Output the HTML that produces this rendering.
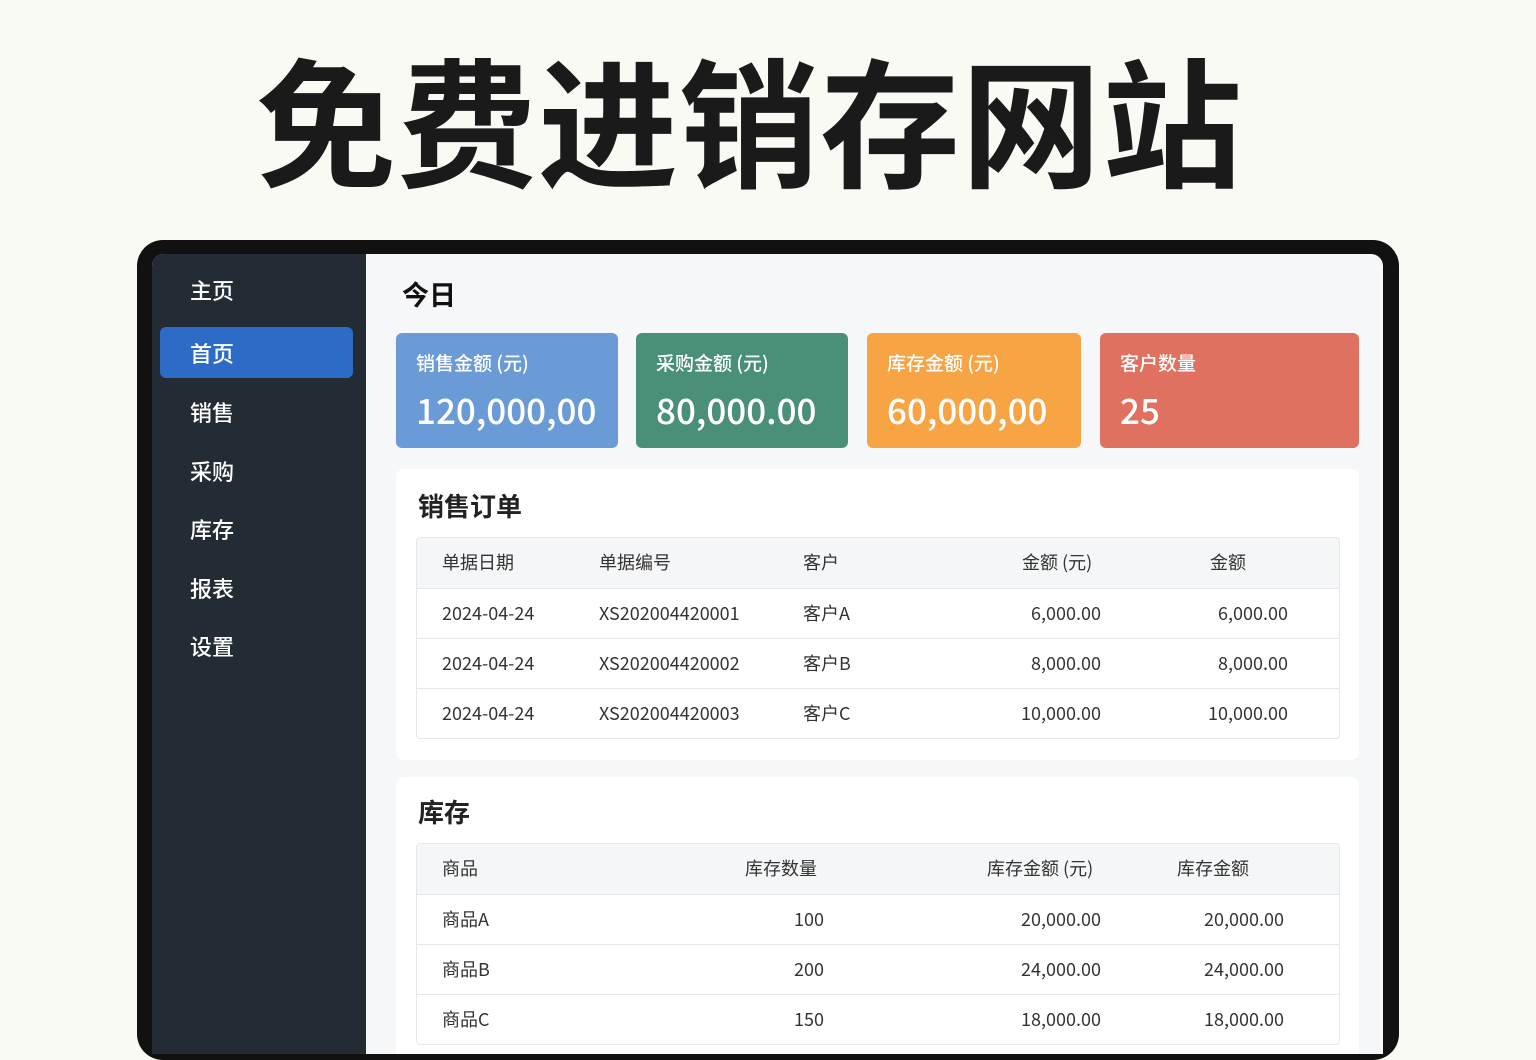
<!DOCTYPE html>
<html><head><meta charset="utf-8">
<style>
*{margin:0;padding:0;box-sizing:border-box}
body{width:1536px;height:1024px;overflow:hidden;background:#fafaf5;font-family:"Noto Sans CJK SC",sans-serif;position:relative}
.a{position:absolute;white-space:nowrap}
h1{position:absolute;left:256px;top:40px;white-space:nowrap;font:700 140px/1.1 "Noto Sans CJK SC",sans-serif;color:#1a1a1a;letter-spacing:1px}
.frame{position:absolute;left:137px;top:240px;width:1262px;height:820px;background:#111;border-radius:26px}
.screen{position:absolute;left:152px;top:254px;width:1231px;height:800px;background:#f6f7f9;border-radius:12px 12px 0 0;overflow:hidden}
.side{position:absolute;left:0;top:0;width:214px;height:800px;background:#232b35}
.nav{position:absolute;left:38px;color:#fff;font:500 22px "Noto Sans CJK SC",sans-serif}
.act{position:absolute;left:8px;top:73px;width:193px;height:51px;background:#2d6cc6;border-radius:6px}
.card{position:absolute;top:79px;height:115px;border-radius:6px;color:#fff}
.card .l{position:absolute;left:20px;top:16px;font:500 19px "Noto Sans CJK SC",sans-serif}
.card .v{position:absolute;left:20px;top:54px;font:500 35px/1.3 "Noto Sans CJK SC",sans-serif}
.panel{position:absolute;left:244px;width:963px;background:#fff;border-radius:8px}
.pt{position:absolute;left:22px;font:700 26px "Noto Sans CJK SC",sans-serif;color:#222}
.tbl{position:absolute;left:20px;width:924px;border:1px solid #e6e7ea;border-radius:4px;overflow:hidden}
.row{position:relative;height:50px;border-top:1px solid #e6e7ea;font:18px/22px "Noto Sans CJK SC",sans-serif;color:#333}
.row:first-child{border-top:none;background:#f5f6f7}
.row span{position:absolute;top:13px}
.r{text-align:right}
</style></head><body>
<h1>免费进销存网站</h1>
<div class="frame"></div>
<div class="screen">
 <div class="side">
  <div class="act"></div>
  <div class="nav" style="top:20px">主页</div>
  <div class="nav" style="top:83px">首页</div>
  <div class="nav" style="top:142px">销售</div>
  <div class="nav" style="top:201px">采购</div>
  <div class="nav" style="top:259px">库存</div>
  <div class="nav" style="top:318px">报表</div>
  <div class="nav" style="top:376px">设置</div>
 </div>
 <div class="a" style="left:250px;top:20px;font:700 27px 'Noto Sans CJK SC',sans-serif;color:#111">今日</div>
 <div class="card" style="left:244px;width:222px;background:#6b9bd6"><div class="l">销售金额 (元)</div><div class="v">120,000,00</div></div>
 <div class="card" style="left:484px;width:212px;background:#4a9079"><div class="l">采购金额 (元)</div><div class="v">80,000.00</div></div>
 <div class="card" style="left:715px;width:214px;background:#f6a444"><div class="l">库存金额 (元)</div><div class="v">60,000,00</div></div>
 <div class="card" style="left:948px;width:259px;background:#e07060"><div class="l">客户数量</div><div class="v">25</div></div>

 <div class="panel" style="top:215px;height:291px">
  <div class="pt" style="top:18px">销售订单</div>
  <div class="tbl" style="top:68px">
   <div class="row"><span style="left:25px">单据日期</span><span style="left:182px">单据编号</span><span style="left:386px">客户</span><span style="left:605px">金额 (元)</span><span style="left:793px">金额</span></div>
   <div class="row"><span style="left:25px">2024-04-24</span><span style="left:182px">XS202004420001</span><span style="left:386px">客户A</span><span class="r" style="right:238px">6,000.00</span><span class="r" style="right:51px">6,000.00</span></div>
   <div class="row"><span style="left:25px">2024-04-24</span><span style="left:182px">XS202004420002</span><span style="left:386px">客户B</span><span class="r" style="right:238px">8,000.00</span><span class="r" style="right:51px">8,000.00</span></div>
   <div class="row"><span style="left:25px">2024-04-24</span><span style="left:182px">XS202004420003</span><span style="left:386px">客户C</span><span class="r" style="right:238px">10,000.00</span><span class="r" style="right:51px">10,000.00</span></div>
  </div>
 </div>

 <div class="panel" style="top:523px;height:320px">
  <div class="pt" style="top:16px">库存</div>
  <div class="tbl" style="top:66px">
   <div class="row"><span style="left:25px">商品</span><span style="left:328px">库存数量</span><span style="left:570px">库存金额 (元)</span><span style="left:760px">库存金额</span></div>
   <div class="row"><span style="left:25px">商品A</span><span class="r" style="right:515px">100</span><span class="r" style="right:238px">20,000.00</span><span class="r" style="right:55px">20,000.00</span></div>
   <div class="row"><span style="left:25px">商品B</span><span class="r" style="right:515px">200</span><span class="r" style="right:238px">24,000.00</span><span class="r" style="right:55px">24,000.00</span></div>
   <div class="row"><span style="left:25px">商品C</span><span class="r" style="right:515px">150</span><span class="r" style="right:238px">18,000.00</span><span class="r" style="right:55px">18,000.00</span></div>
  </div>
 </div>
</div>
</body></html>
